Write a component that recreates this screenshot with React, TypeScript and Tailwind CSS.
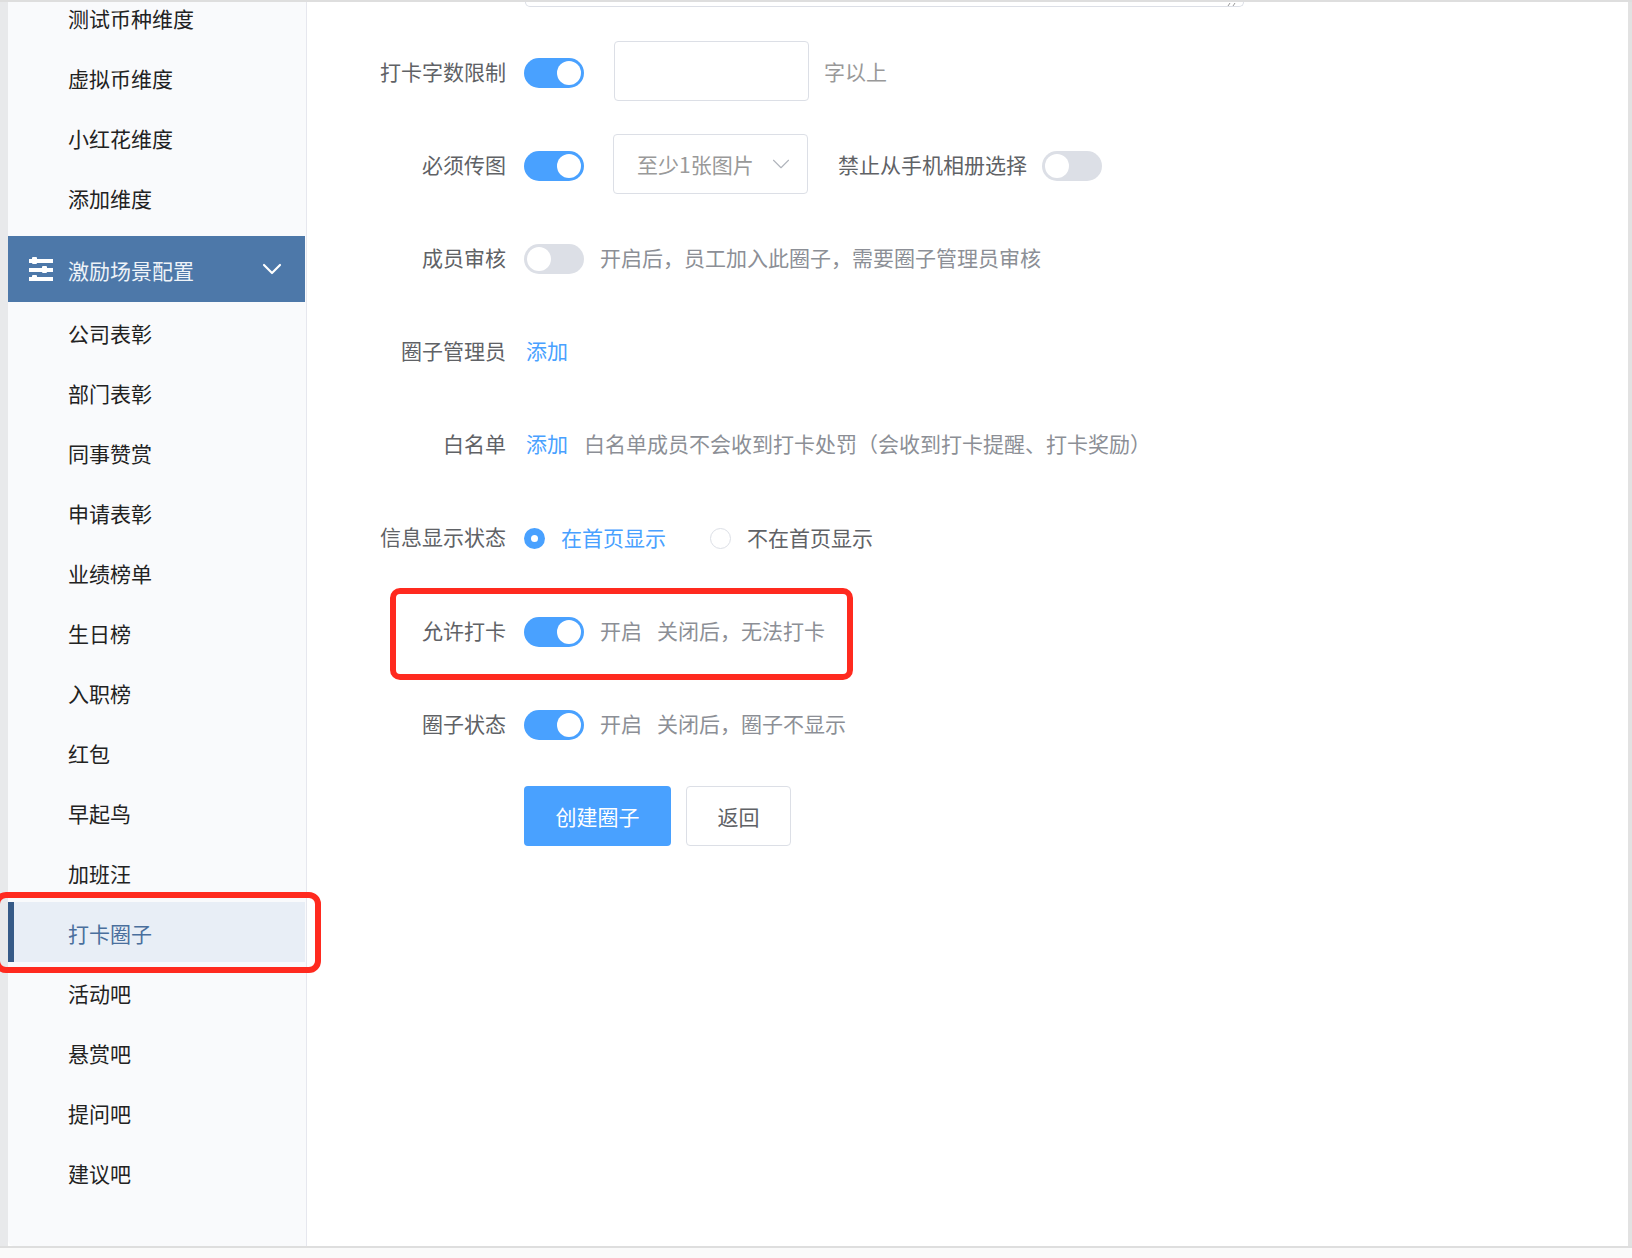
import { ChevronDown } from 'lucide-react'

const topItems = ['测试币种维度', '虚拟币维度', '小红花维度', '添加维度']
const sceneItems = ['公司表彰', '部门表彰', '同事赞赏', '申请表彰', '业绩榜单', '生日榜', '入职榜', '红包', '早起鸟', '加班汪', '打卡圈子', '活动吧', '悬赏吧', '提问吧', '建议吧']

function Toggle({ on = true }: { on?: boolean }) {
  return (
    <div className={`w-[60px] h-[30px] rounded-full flex items-center px-[3px] shrink-0 ${on ? 'bg-[#49a1ff] justify-end' : 'bg-[#dcdfe6] justify-start'}`}>
      <div className="w-[24px] h-[24px] rounded-full bg-white" />
    </div>
  )
}

function Row({ label, children, className = 'mb-[33px]' }: { label?: string; children: React.ReactNode; className?: string }) {
  return (
    <div className={`flex items-center h-[60px] gap-[18px] ${className}`}>
      <div className="w-[199px] shrink-0 pb-[2px] text-right text-[#606266]">{label}</div>
      {children}
    </div>
  )
}

function Sidebar() {
  return (
    <aside className="relative w-[299px] shrink-0 bg-[#f9fafc] border-r border-[#e6e7ee] rounded-bl-[6px] overflow-hidden">
      <div className="-mt-[13px] mb-[7px]">
        {topItems.map((t) => (
          <div key={t} className="h-[60px] flex items-center pl-[60px] text-[#222]">{t}</div>
        ))}
      </div>
      <div className="h-[66px] mr-[1px] bg-[#4d78a9] flex items-center text-[#eef3f8]">
        <svg className="ml-[21px] mr-[15px]" width="24" height="24" viewBox="0 0 24 24" fill="white">
          <rect x="0" y="2" width="24" height="4" />
          <rect x="3" y="0" width="5" height="7" rx="1" />
          <rect x="0" y="11" width="24" height="4" />
          <rect x="13" y="9" width="5" height="7" rx="1" />
          <rect x="0" y="20" width="24" height="4" />
          <rect x="3" y="18" width="5" height="6" rx="1" />
        </svg>
        <span className="flex-1 pt-[3px]">激励场景配置</span>
        <ChevronDown className="mr-[17px] text-white" size={32} strokeWidth={1.6} />
      </div>
      {sceneItems.map((t) =>
        t === '打卡圈子' ? (
          <div key={t} className="h-[60px] mr-[1px] flex items-center pl-[54px] pt-[3px] bg-[#e8eef6] border-l-[6px] border-[#365a87] text-[#4a6f9d]">{t}</div>
        ) : (
          <div key={t} className="h-[60px] flex items-center pl-[60px] pt-[3px] text-[#222]">{t}</div>
        ),
      )}
    </aside>
  )
}

export default function App() {
  return (
    <div className="relative w-[1632px] h-[1258px] overflow-hidden bg-[#fafafa] text-[21px] font-['Noto_Sans_CJK_SC','Noto_Sans',sans-serif]">
      <div className="h-[2px] bg-[#dedede]" />
      <div className="flex h-[1244px] bg-white">
        <div className="w-[8px] shrink-0 bg-[#e8e9eb]" />
        <Sidebar />
        <main className="flex-1">
          <div className="relative ml-[218px] w-[719px] h-[5px] border border-t-0 border-[#dcdfe6] rounded-b-[6px]">
            <svg className="absolute right-[6px] top-0" width="10" height="4" viewBox="0 0 10 4" stroke="#9a9a9a" strokeWidth="1">
              <path d="M1 4 L3 1" />
              <path d="M6 4 L8 1" />
            </svg>
          </div>
          <div className="pt-[36px]">
            <Row label="打卡字数限制">
              <Toggle />
              <div className="w-[195px] h-[60px] -mt-[5px] ml-[12px] border border-[#dcdfe6] rounded-[4px] bg-white" />
              <span className="-ml-[3px] pb-[2px] text-[#999]">字以上</span>
            </Row>
            <Row label="必须传图">
              <Toggle />
              <div className="w-[195px] h-[60px] -mt-[5px] ml-[11px] border border-[#dcdfe6] rounded-[4px] bg-white flex items-center pl-[23px] pr-[11px] text-[#999]">
                <span className="flex-1 pt-[2px]">至少1张图片</span>
                <ChevronDown size={30} strokeWidth={0.9} className="text-[#b0b4bc]" />
              </div>
              <span className="ml-[12px] pb-[2px] text-[#606266]">禁止从手机相册选择</span>
              <div className="-ml-[3px]"><Toggle on={false} /></div>
            </Row>
            <Row label="成员审核">
              <Toggle on={false} />
              <span className="-ml-[2px] pb-[2px] text-[#8c8f96]">开启后，员工加入此圈子，需要圈子管理员审核</span>
            </Row>
            <Row label="圈子管理员">
              <span className="ml-[2px] pb-[2px] text-[#49a1ff]">添加</span>
            </Row>
            <Row label="白名单">
              <span className="ml-[2px] pb-[2px] text-[#49a1ff]">添加</span>
              <span className="-ml-[2px] pb-[2px] text-[#8c8f96]">白名单成员不会收到打卡处罚（会收到打卡提醒、打卡奖励）</span>
            </Row>
            <Row label="信息显示状态" className="mb-[34px]">
              <div className="w-[21px] h-[21px] rounded-full bg-[#49a1ff] flex items-center justify-center shrink-0">
                <div className="w-[7px] h-[7px] rounded-full bg-white" />
              </div>
              <span className="-ml-[2px] text-[#49a1ff]">在首页显示</span>
              <div className="ml-[26px] w-[21px] h-[21px] rounded-full border border-[#dcdfe6] bg-white shrink-0" />
              <span className="-ml-[2px] text-[#606266]">不在首页显示</span>
            </Row>
            <Row label="允许打卡">
              <Toggle />
              <span className="-ml-[2px] pb-[2px] text-[#8c8f96]">开启</span>
              <span className="-ml-[3px] pb-[2px] text-[#8c8f96]">关闭后，无法打卡</span>
            </Row>
            <Row label="圈子状态" className="mb-[31px]">
              <Toggle />
              <span className="-ml-[2px] pb-[2px] text-[#8c8f96]">开启</span>
              <span className="-ml-[3px] pb-[2px] text-[#8c8f96]">关闭后，圈子不显示</span>
            </Row>
            <div className="ml-[217px] flex gap-[15px]">
              <button className="w-[147px] h-[60px] pt-[2px] rounded-[4px] bg-[#49a1ff] text-white">创建圈子</button>
              <button className="w-[105px] h-[60px] pt-[2px] rounded-[4px] border border-[#dcdfe6] bg-white text-[#606266]">返回</button>
            </div>
          </div>
        </main>
        <div className="w-[4px] shrink-0 bg-[#e2e2e2]" />
      </div>
      <div className="h-[2px] bg-[#dedede]" />

      <div className="absolute left-[-6px] top-[892px] w-[327px] h-[81px] border-[6px] border-[#ff2a1f] rounded-[12px]" />
      <div className="absolute left-[390px] top-[588px] w-[463px] h-[92px] border-[6px] border-[#ff2a1f] rounded-[10px]" />
    </div>
  )
}
